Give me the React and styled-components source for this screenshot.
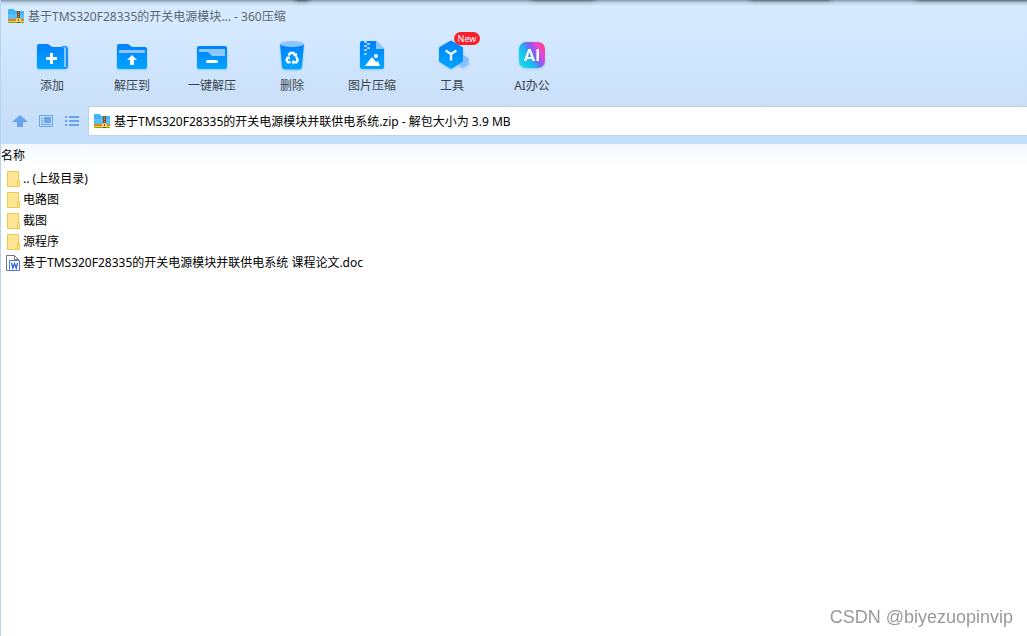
import React from "react";
import styled, { createGlobalStyle } from "styled-components";

const GlobalStyle = createGlobalStyle`
  * { box-sizing: border-box; }
  body {
    margin: 0;
    background: #fff;
    color: #000;
    font: 12px/20px "Noto Sans", "Noto Sans CJK SC", sans-serif;
  }
`;

const Window = styled.main`
  min-height: 100vh;
  border-left: 1px solid #b5d3f5;
  background: #fff;
`;

const Chrome = styled.header`
  position: relative;
  background: linear-gradient(#d6ebff 0, #d5eaff 24px, #cfe5fe 64px, #cae0f8 104px, #c3dff9 136px);
`;

const TopShade = styled.div`
  position: absolute;
  inset: 0 0 auto;
  height: 6px;
  background: linear-gradient(90deg,
    #8fa2b5 0, #8fa2b5 290px, #5b6876 298px, #5b6876 304px, #8fa2b5 312px,
    #8fa2b5 526px, #6c7b8c 534px, #6c7b8c 590px, #8fa2b5 598px,
    #8fa2b5 745px, #6c7b8c 753px, #6c7b8c 826px, #8fa2b5 834px,
    #8fa2b5 911px, #6c7b8c 919px);
  mask-image: linear-gradient(#000 0, #000 1px, #0006 2px, transparent);
`;

const TitleBar = styled.div`
  display: flex;
  align-items: center;
  gap: 4px;
  height: 32px;
  padding-left: 7px;
`;

const Title = styled.h1`
  margin: 0;
  font-size: 12px;
  font-weight: 400;
  line-height: 22px;
  padding-top: 2px;
  color: #5c6670;
`;

const Toolbar = styled.nav`
  display: flex;
  height: 74px;
  padding-left: 11px;
`;

const Tool = styled.button`
  position: relative;
  display: flex;
  flex-direction: column;
  align-items: center;
  gap: 4px;
  width: 80px;
  padding: 4px 0 0;
  border: 0;
  background: none;
  font: inherit;
  color: #3c434a;
  cursor: pointer;
`;

const Badge = styled.span`
  position: absolute;
  top: 0;
  left: 42px;
  width: 26px;
  border-radius: 7px;
  background: #fb1f2c;
  color: #fff;
  font-size: 9px;
  line-height: 13px;
  text-align: center;
`;

const AddressBar = styled.div`
  display: flex;
  align-items: center;
  height: 38px;
  padding: 0 0 8px 6px;
`;

const NavButton = styled.button`
  display: flex;
  align-items: center;
  justify-content: center;
  width: 26px;
  height: 28px;
  padding: 0;
  border: 0;
  background: none;
  color: #69a3ee;
  cursor: pointer;
`;

const PathBox = styled.label`
  display: flex;
  flex: 1;
  align-items: center;
  gap: 4px;
  height: 30px;
  margin-left: 3px;
  padding-left: 5px;
  border: 1px solid #b7d4f3;
  border-right: 0;
  background: #fff;
`;

const PathInput = styled.input`
  flex: 1;
  min-width: 0;
  padding: 2px 0 0;
  border: 0;
  outline: 0;
  background: none;
  font: inherit;
  color: inherit;
`;

const FileTable = styled.table`
  width: 100%;
  border-collapse: collapse;
`;

const ColumnHead = styled.th`
  height: 24px;
  padding: 0;
  background: linear-gradient(#f4f9ff, #fff);
  font-weight: 400;
  text-align: left;
`;

const FileCell = styled.td`
  height: 21px;
  padding: 0 0 0 5px;
`;

const FileName = styled.div`
  display: flex;
  align-items: center;
  gap: 2px;
`;

const Watermark = styled.div`
  position: fixed;
  right: 14px;
  bottom: 8px;
  color: #999;
  font: 18px/22px "Liberation Sans", sans-serif;
`;

const ArchiveIcon = () => (
  <svg width="16" height="16" viewBox="0 0 16 16" aria-hidden="true">
    <path d="M0 2q0-1 1-1h4q1 0 1.500 1t1.500 1h7q1 0 1 1v7H0z" fill="#3fb4f6" />
    <path d="M0 6h16v5H0z" fill="#55c0fa" />
    <path d="M0 11h16v2H0z" fill="#f47c14" />
    <path d="M0 13h16v1H0z" fill="#fbc93a" />
    <path d="M0 14h16q0 1-1 1H1q-1 0-1-1z" fill="#58b02c" />
    <path d="M9 3h3v12H9z" fill="#7d4a22" />
    <path d="M10 4h1v1h-1zM10 6h1v1h-1zM10 8h1v1h-1z" fill="#d9a05c" />
    <path d="M9 10h3v1h1v3H8v-3h1z" fill="#ffd45c" />
    <path d="M10 11h1v2h-1z" fill="#7d4a22" />
  </svg>
);

const ToolSvg = ({ children }) => (
  <svg width="36" height="36" viewBox="0 0 36 36" aria-hidden="true">
    <defs>
      <linearGradient id="blue" x1="0" y1="0" x2="0" y2="1">
        <stop stopColor="#0080ff" />
        <stop offset="1" stopColor="#00a6ff" />
      </linearGradient>
      <linearGradient id="ai" x1="0" y1=".8" x2="1" y2=".2">
        <stop stopColor="#12dce8" />
        <stop offset=".35" stopColor="#18bdf0" />
        <stop offset=".58" stopColor="#7a62f4" />
        <stop offset=".8" stopColor="#e845dc" />
        <stop offset="1" stopColor="#ff4468" />
      </linearGradient>
      <filter id="glow" x="-20%" y="-20%" width="140%" height="150%">
        <feDropShadow dx="0" dy="1" stdDeviation="1" floodColor="#2b8df5" floodOpacity=".3" />
      </filter>
    </defs>
    <g filter="url(#glow)">{children}</g>
  </svg>
);

const AddIcon = () => (
  <ToolSvg>
    <path d="M28 10h3q3 0 3 3v17q0 3-3 3h-4z" fill="#168fff" />
    <path d="M27 11h3q2 0 2 2v18h-5z" fill="#8cc8ff" />
    <path d="M3 10q0-2 2-2h9l4 3h10q2 0 2 2v20H5q-2 0-2-2z" fill="url(#blue)" />
    <path d="M17.500 17v11M12 22.500h11" stroke="#fff" strokeWidth="3" />
  </ToolSvg>
);

const ExtractIcon = () => (
  <ToolSvg>
    <path d="M3 10q0-2 2-2h9l4 3h13q2 0 2 2v18q0 2-2 2H5q-2 0-2-2z" fill="url(#blue)" />
    <path d="M5 14h26v3H5z" fill="#8cc8ff" />
    <path d="M18 19l5 5h-3v5h-4v-5h-3z" fill="#fff" />
  </ToolSvg>
);

const OneKeyIcon = () => (
  <ToolSvg>
    <rect x="3" y="10" width="30" height="23" rx="2" fill="url(#blue)" />
    <path d="M5 13h26v7H18l-4-4H5z" fill="#8cc8ff" />
    <path d="M13.500 25.500h9" stroke="#fff" strokeWidth="3" strokeLinecap="round" />
  </ToolSvg>
);

const TrashIcon = () => (
  <ToolSvg>
    <path d="M6 8h24l-2 23q-.3 2-2.500 2.500h-15Q8.300 33 8 31z" fill="url(#blue)" />
    <ellipse cx="18" cy="8" rx="12" ry="3" fill="#8cc8ff" />
    <g fill="none" stroke="#fff" strokeWidth="2.400">
      <path d="M14.500 19.500L16.300 17h3.400l1.300 2" />
      <path d="M22.300 21l1.400 3-1.200 2.300H19.500" />
      <path d="M16.500 26.300H14l-1.500-2 1.300-2.600" />
    </g>
    <path d="M23 17v4l-4-1zM20 23.800v5l-2.800-2.500zM11.500 21l4-.8.600 3.600z" fill="#fff" />
  </ToolSvg>
);

const PictureIcon = () => (
  <ToolSvg>
    <path d="M6 7q0-2 2-2h14l8 8v18q0 2-2 2H8q-2 0-2-2z" fill="url(#blue)" />
    <path d="M22 5l8 8h-8z" fill="#8cc8ff" />
    <path d="M10 5h3v2h-3zM13 7h3v2h-3zM10 9h3v2h-3zM13 11h3v2h-3zM10 13h3v2h-3zM10 17h3v2h-3z" fill="#9bd0ff" />
    <circle cx="22" cy="20" r="2" fill="#fff" />
    <path d="M11 30l6-8q1-1 2 0l3 4 2-1 2 5z" fill="#fff" />
  </ToolSvg>
);

const CubeIcon = () => (
  <ToolSvg>
    <path d="M29 19l5.500 3v6.500L29 32l-5.500-3.500V22z" fill="#86c1ff" />
    <path d="M16 5q1-.6 2 0l10 5.700q1 .6 1 1.700v12.200q0 1.100-1 1.700L18 32.500q-1 .6-2 0L6 26.300q-1-.6-1-1.700V12.400q0-1.100 1-1.700z" fill="url(#blue)" />
    <path d="M11.500 14.500L17 18l5.500-3.500M17 18v6.500" fill="none" stroke="#e8f5ff" strokeWidth="2.400" />
  </ToolSvg>
);

const AiText = styled.text`
  font: 700 17px Roboto, sans-serif;
`;

const AiIcon = () => (
  <ToolSvg>
    <rect x="5" y="6" width="26" height="26" rx="7" fill="url(#ai)" />
    <AiText x="18" y="25" textAnchor="middle" fill="#fff">AI</AiText>
  </ToolSvg>
);

const UpIcon = () => (
  <svg width="14" height="14" viewBox="0 0 14 14" aria-hidden="true">
    <path d="M7 1l7 6v1h-4v5H4V8H0V7z" fill="currentColor" />
  </svg>
);

const PreviewIcon = () => (
  <svg width="14" height="12" viewBox="0 0 14 12" aria-hidden="true">
    <path d="M.5.500h13v11H.500z" fill="none" stroke="currentColor" />
    <path d="M2 3h2v1H2zM2 5h2v1H2zM2 7h2v1H2zM2 9h10v1H2zM5 2h7v6H5z" fill="currentColor" />
  </svg>
);

const ListIcon = () => (
  <svg width="14" height="12" viewBox="0 0 14 12" aria-hidden="true">
    <path d="M0 1h2v2H0zM4 1h10v2H4zM0 5h2v2H0zM4 5h10v2H4zM0 9h2v2H0zM4 9h10v2H4z" fill="currentColor" />
  </svg>
);

const FolderIcon = () => (
  <svg width="15" height="16" viewBox="0 0 15 16" aria-hidden="true">
    <path d="M1.500.500h11v15h-11z" fill="#ffe694" stroke="#edc94f" />
    <path d="M11.500 9.500h2v6h-2z" fill="#ffe694" stroke="#edc94f" />
  </svg>
);

const DocIcon = () => (
  <svg width="15" height="16" viewBox="0 0 15 16" aria-hidden="true">
    <path d="M.5.500h8l4 4v11H.500z" fill="#fff" stroke="#777" />
    <path d="M8.500.500v4h4" fill="none" stroke="#777" />
    <path d="M3.500 5.500h10v10h-10z" fill="#fff" stroke="#4a74ee" />
    <path d="M5.500 8l1.300 5 1.700-4.500 1.700 4.500 1.300-5" fill="none" stroke="#2f5fe8" strokeWidth="1.300" />
  </svg>
);

const tools = [
  { label: "添加", Icon: AddIcon },
  { label: "解压到", Icon: ExtractIcon },
  { label: "一键解压", Icon: OneKeyIcon },
  { label: "删除", Icon: TrashIcon },
  { label: "图片压缩", Icon: PictureIcon },
  { label: "工具", Icon: CubeIcon, badge: "New" },
  { label: "AI办公", Icon: AiIcon },
];

const files = [
  { name: ".. (上级目录)", Icon: FolderIcon },
  { name: "电路图", Icon: FolderIcon },
  { name: "截图", Icon: FolderIcon },
  { name: "源程序", Icon: FolderIcon },
  { name: "基于TMS320F28335的开关电源模块并联供电系统 课程论文.doc", Icon: DocIcon },
];

export default function App() {
  return (
    <Window>
      <GlobalStyle />
      <Chrome>
        <TopShade />
        <TitleBar>
          <ArchiveIcon />
          <Title>基于TMS320F28335的开关电源模块... - 360压缩</Title>
        </TitleBar>
        <Toolbar>
          {tools.map(({ label, Icon, badge }) => (
            <Tool key={label} type="button">
              <Icon />
              {label}
              {badge && <Badge>{badge}</Badge>}
            </Tool>
          ))}
        </Toolbar>
        <AddressBar>
          <NavButton type="button" aria-label="上级目录"><UpIcon /></NavButton>
          <NavButton type="button" aria-label="预览"><PreviewIcon /></NavButton>
          <NavButton type="button" aria-label="列表"><ListIcon /></NavButton>
          <PathBox>
            <ArchiveIcon />
            <PathInput
              aria-label="路径"
              defaultValue="基于TMS320F28335的开关电源模块并联供电系统.zip - 解包大小为 3.9 MB"
            />
          </PathBox>
        </AddressBar>
      </Chrome>
      <FileTable>
        <thead>
          <tr><ColumnHead scope="col">名称</ColumnHead></tr>
        </thead>
        <tbody>
          {files.map(({ name, Icon }) => (
            <tr key={name}>
              <FileCell>
                <FileName><Icon />{name}</FileName>
              </FileCell>
            </tr>
          ))}
        </tbody>
      </FileTable>
      <Watermark>CSDN @biyezuopinvip</Watermark>
    </Window>
  );
}
